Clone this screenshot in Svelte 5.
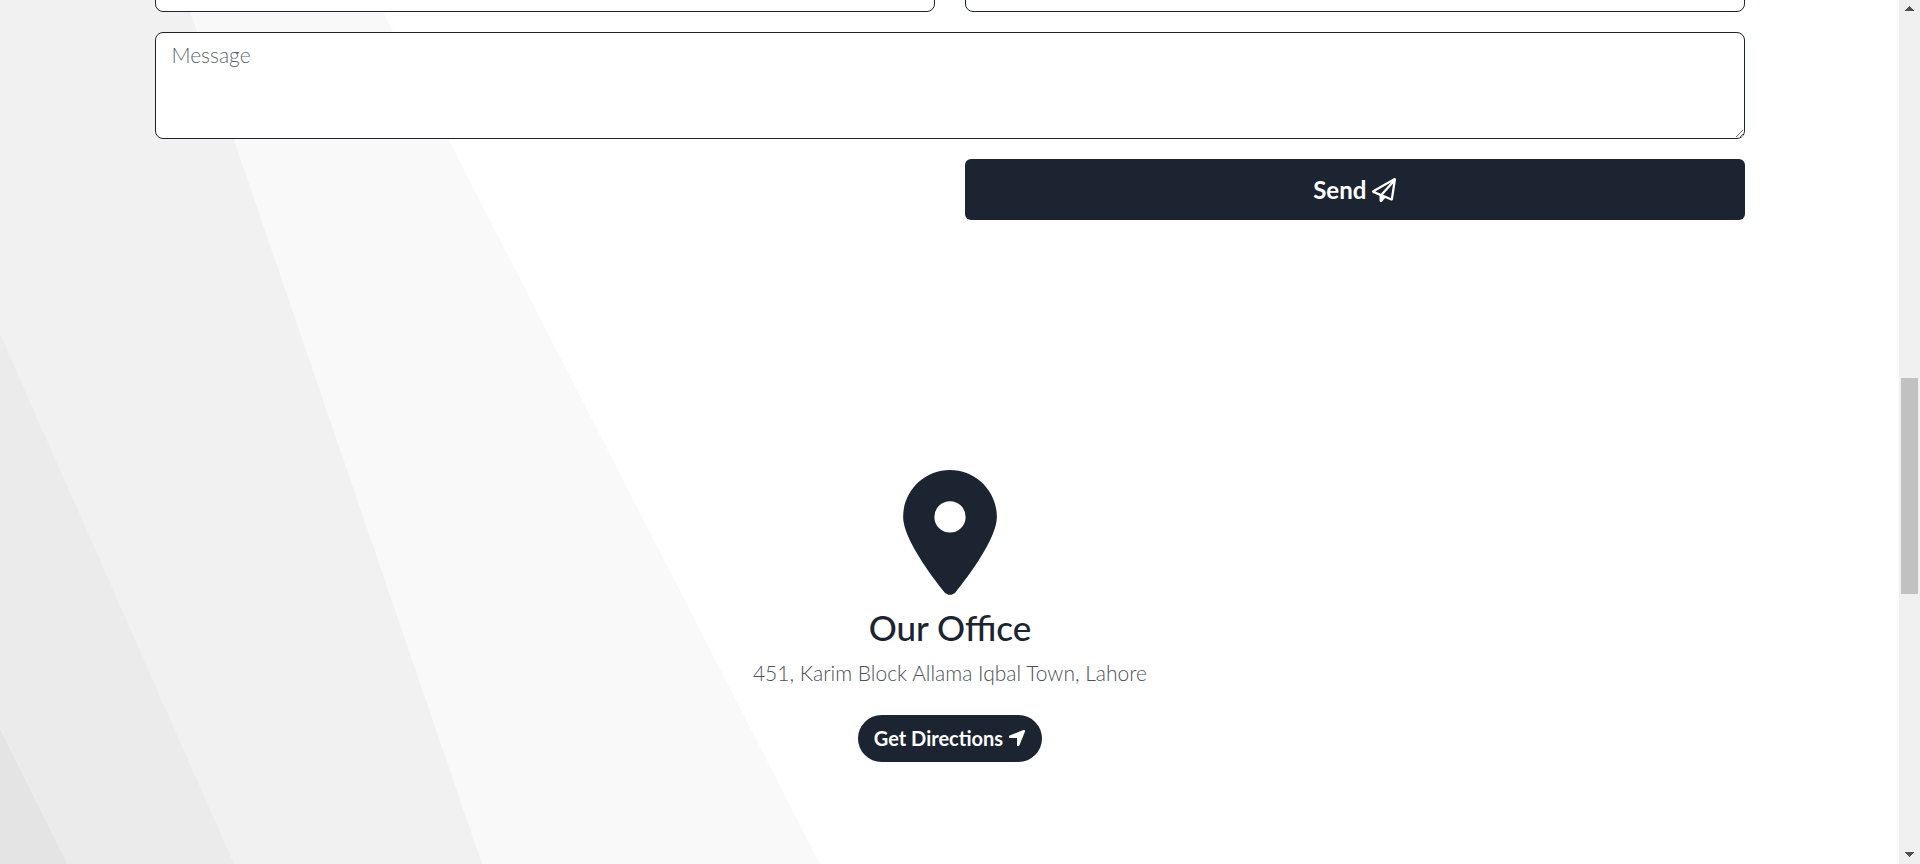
<script>
  let name = $state('');
  let email = $state('');
  let message = $state('');
</script>

<div class="window">
  <main class="page">
    <svg class="backdrop" viewBox="0 0 1899 864" preserveAspectRatio="none" aria-hidden="true">
      <path fill="#f9f9f9" d="M0 0H377L820 864H0z" />
      <path fill="#f1f1f1" d="M0 0H186L482 864H0z" />
      <path fill="#ebebeb" d="M0 334L234 864H0z" />
      <path fill="#e4e4e4" d="M0 729L67 864H0z" />
    </svg>

    <form class="container form" onsubmit={(e) => e.preventDefault()}>
      <input class="field" type="text" aria-label="Name" bind:value={name} />
      <input class="field" type="email" aria-label="Email" bind:value={email} />
      <textarea class="field message" placeholder="Message" aria-label="Message" bind:value={message}></textarea>
      <button class="send" type="submit">
        <span>Send</span>
        <svg width="24" height="24" viewBox="0 0 512 512" fill="currentColor" aria-hidden="true">
          <path d="M16.1 260.2c-22.6 12.9-20.5 47.3 3.6 57.3L160 376V479.3c0 18.1 14.6 32.7 32.7 32.7c9.7 0 18.9-4.3 25.1-11.8l62-74.3 123.9 51.6c18.9 7.9 40.8-4.5 43.9-24.7l64-416c1.9-12.1-3.4-24.3-13.5-31.2s-23.3-7.5-34-1.4l-448 256zm52.1 25.5L409.7 90.6 190.1 336l1.2 1L68.2 285.7zM403.3 425.4L236.7 355.9 450.8 116.6 403.3 425.4z" />
        </svg>
      </button>
    </form>

    <section class="container office">
      <svg class="pin" width="94" height="125" viewBox="0 0 384 512" fill="currentColor" aria-hidden="true">
        <path d="M215.7 499.2C267 435 384 279.4 384 192C384 86 298 0 192 0S0 86 0 192c0 87.4 117 243 168.3 307.2c12.3 15.3 35.1 15.3 47.4 0zM192 128a64 64 0 1 1 0 128 64 64 0 1 1 0-128z" />
      </svg>
      <h2>Our Office</h2>
      <p>451, Karim Block Allama Iqbal Town, Lahore</p>
      <a class="directions" href="#directions">
        <span>Get Directions</span>
        <svg width="18" height="20" viewBox="0 0 448 512" fill="currentColor" aria-hidden="true">
          <path d="M429.6 92.1c4.9-11.9 2.1-25.6-7-34.7s-22.8-11.9-34.7-7l-352 144c-14.2 5.8-22.2 20.8-19.3 35.8s16.1 25.8 31.4 25.8H224V432c0 15.3 10.8 28.4 25.8 31.4s30-5.1 35.8-19.3l144-352z" />
        </svg>
      </a>
    </section>
  </main>

  <div class="scrollbar" aria-hidden="true">
    <svg width="21" height="21" viewBox="0 0 21 21" shape-rendering="crispEdges"><path fill="#505050" d="M10 6h1v1h1v1h1v1h1v1h1v1H6v-1h1V9h1V8h1V7h1z" /></svg>
    <div class="thumb"></div>
    <svg class="down" width="21" height="21" viewBox="0 0 21 21" shape-rendering="crispEdges"><path fill="#505050" d="M6 9h9v1h-1v1h-1v1h-1v1h-1v1h-1v-1H9v-1H8v-1H7v-1H6z" /></svg>
  </div>
</div>

<style>
  :global(body) {
    margin: 0;
    background: #fff;
    font-family: Lato, 'Open Sans', sans-serif;
  }

  .window {
    display: flex;
    height: 100vh;
    overflow: hidden;
  }

  .page {
    position: relative;
    flex: 1;
    overflow: hidden;
    color: #1d2431;
  }

  .backdrop {
    position: absolute;
    inset: 0;
    z-index: -1;
    width: 100%;
    height: 100%;
  }

  .container {
    box-sizing: border-box;
    width: 85%;
    margin: 0 auto;
    padding: 0 12px 0 13px;
  }

  .form {
    display: grid;
    grid-template-columns: 1fr 1fr;
    gap: 20px 30px;
    margin-top: -36px;
  }

  .field {
    box-sizing: border-box;
    width: 100%;
    height: 48px;
    margin: 0;
    padding: 7px 15px;
    border: 1px solid #1d2431;
    border-radius: 8px;
    background: #fff;
    color: #1d2431;
    font: 300 21px/30px Lato, 'Open Sans', sans-serif;
    outline: none;
  }

  .message {
    grid-column: 1 / -1;
    display: block;
    height: 107px;
    resize: vertical;
  }

  .message::placeholder {
    color: #5c646c;
    opacity: 1;
  }

  .send {
    grid-column: 2;
    display: flex;
    align-items: center;
    justify-content: center;
    gap: 6px;
    height: 61px;
    border: 0;
    border-radius: 6px;
    background: #1d2431;
    color: #fff;
    font: 700 24px/36px Lato, 'Open Sans', sans-serif;
    cursor: pointer;
  }

  .office {
    display: flex;
    flex-direction: column;
    align-items: center;
    padding-top: 250px;
    text-align: center;
  }

  h2 {
    margin: 10px 0 8px;
    font-size: 35px;
    font-weight: 500;
    line-height: 44px;
  }

  p {
    margin: 0 0 26px;
    color: #4c5157;
    font-size: 21px;
    font-weight: 300;
    line-height: 32px;
  }

  .directions {
    display: flex;
    align-items: center;
    gap: 5px;
    box-sizing: border-box;
    height: 47px;
    padding: 0 16px 2px;
    border-radius: 24px;
    background: #1d2431;
    color: #fff;
    font-size: 20px;
    font-weight: 700;
    text-decoration: none;
  }

  .scrollbar {
    display: grid;
    grid-template-rows: 21px 357fr 216fr 249fr 21px;
    width: 21px;
    background: #f0f0f0;
  }

  .thumb {
    grid-row: 3;
    margin: 0 2px;
    background: #c1c1c1;
  }

  .down {
    grid-row: 5;
  }
</style>
